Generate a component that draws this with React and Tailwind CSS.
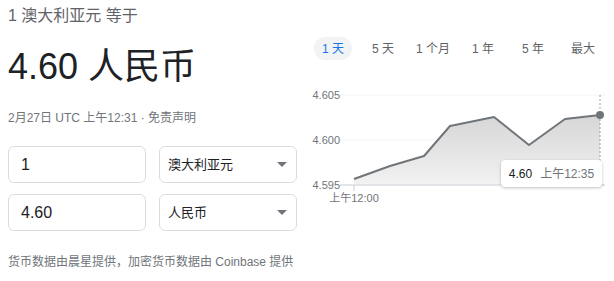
import React from 'react';

const tabs = ['1 天', '5 天', '1 个月', '1 年', '5 年', '最大'];

const pts = [
  [54, 94],
  [90, 81],
  [124, 71],
  [150, 41],
  [194, 32],
  [229, 60],
  [265, 34],
  [300, 30],
];

function Field({ value }) {
  return (
    <div className="w-[138px] h-[37px] border border-[#dadce0] rounded-md flex items-center px-3 text-[16px] text-[#202124]">
      {value}
    </div>
  );
}

function Select({ label }) {
  return (
    <div className="w-[138px] h-[37px] border border-[#dadce0] rounded-md flex items-center justify-between pl-2 pr-[9px] text-[13px] text-[#202124]">
      <span>{label}</span>
      <svg width="10" height="5" viewBox="0 0 10 5">
        <path d="M0 0h10L5 5z" fill="#70757a" />
      </svg>
    </div>
  );
}

function Chart() {
  const line = pts.map((p) => p.join(',')).join(' ');
  const area = `54,100 ${line} 300,100`;
  return (
    <div className="relative w-[314px] h-[125px]">
      <svg width="314" height="125" className="block">
        <defs>
          <linearGradient id="fill" x1="0" y1="0" x2="0" y2="1">
            <stop offset="0" stopColor="#d6d6d6" />
            <stop offset="1" stopColor="#f2f2f2" />
          </linearGradient>
        </defs>
        <line x1="40" y1="10" x2="305" y2="10" stroke="#f1f3f4" />
        <line x1="40" y1="55" x2="305" y2="55" stroke="#f1f3f4" />
        <polygon points={area} fill="url(#fill)" />
        <line x1="40" y1="100" x2="305" y2="100" stroke="#dadce0" strokeWidth="1.5" />
        <line x1="54" y1="100" x2="54" y2="106" stroke="#dadce0" strokeWidth="1.5" />
        <line x1="300" y1="10" x2="300" y2="100" stroke="#9aa0a6" strokeDasharray="2 2" />
        <polyline points={line} fill="none" stroke="#70757a" strokeWidth="2" strokeLinejoin="round" />
        <circle cx="300" cy="30" r="4" fill="#70757a" />
        <g fontSize="11" fill="#70757a" fontFamily="'Liberation Sans', 'Noto Sans CJK SC', sans-serif">
          <text x="40" y="14" textAnchor="end">4.605</text>
          <text x="40" y="59" textAnchor="end">4.600</text>
          <text x="40" y="104" textAnchor="end">4.595</text>
          <text x="54" y="117" textAnchor="middle">上午12:00</text>
        </g>
      </svg>
      <div className="absolute left-[201px] top-[75px] w-[101px] h-[27px] bg-white rounded shadow-[0_1px_3px_rgba(0,0,0,0.25)] flex items-center justify-center gap-2 text-[12px]">
        <span className="text-[#202124]">4.60</span>
        <span className="text-[#70757a]">上午12:35</span>
      </div>
    </div>
  );
}

export default function App() {
  return (
    <div
      className="w-[614px] h-[281px] bg-white flex overflow-hidden"
      style={{ fontFamily: "'Liberation Sans', 'Noto Sans CJK SC', sans-serif" }}
    >
      <div className="w-[300px] pl-2 pt-[6px]">
        <div className="text-[16px] leading-5 text-[#5f6368]">1 澳大利亚元 等于</div>
        <div className="mt-[19px] text-[36px] leading-[44px] text-[#202124]">4.60 人民币</div>
        <div className="mt-[21px] text-[12px] leading-4 text-[#70757a]">2月27日 UTC 上午12:31 · 免责声明</div>
        <div className="mt-[20px] flex flex-col gap-[11px]">
          <div className="flex gap-[13px]">
            <Field value="1" />
            <Select label="澳大利亚元" />
          </div>
          <div className="flex gap-[13px]">
            <Field value="4.60" />
            <Select label="人民币" />
          </div>
        </div>
        <div className="mt-[23px] text-[12px] leading-4 text-[#70757a]">
          货币数据由晨星提供，加密货币数据由 Coinbase 提供
        </div>
      </div>
      <div className="flex-1 pt-[37px]">
        <div className="flex pl-2">
          {tabs.map((t, i) => (
            <div key={t} className="w-[50px] flex justify-center">
              <span
                className={
                  i === 0
                    ? 'h-[23px] px-[8px] rounded-full bg-[#f1f3f4] text-[#1a73e8] text-[12px] flex items-center'
                    : 'h-[23px] px-[8px] text-[#5f6368] text-[12px] flex items-center'
                }
              >
                {t}
              </span>
            </div>
          ))}
        </div>
        <div className="mt-[25px]">
          <Chart />
        </div>
      </div>
    </div>
  );
}
